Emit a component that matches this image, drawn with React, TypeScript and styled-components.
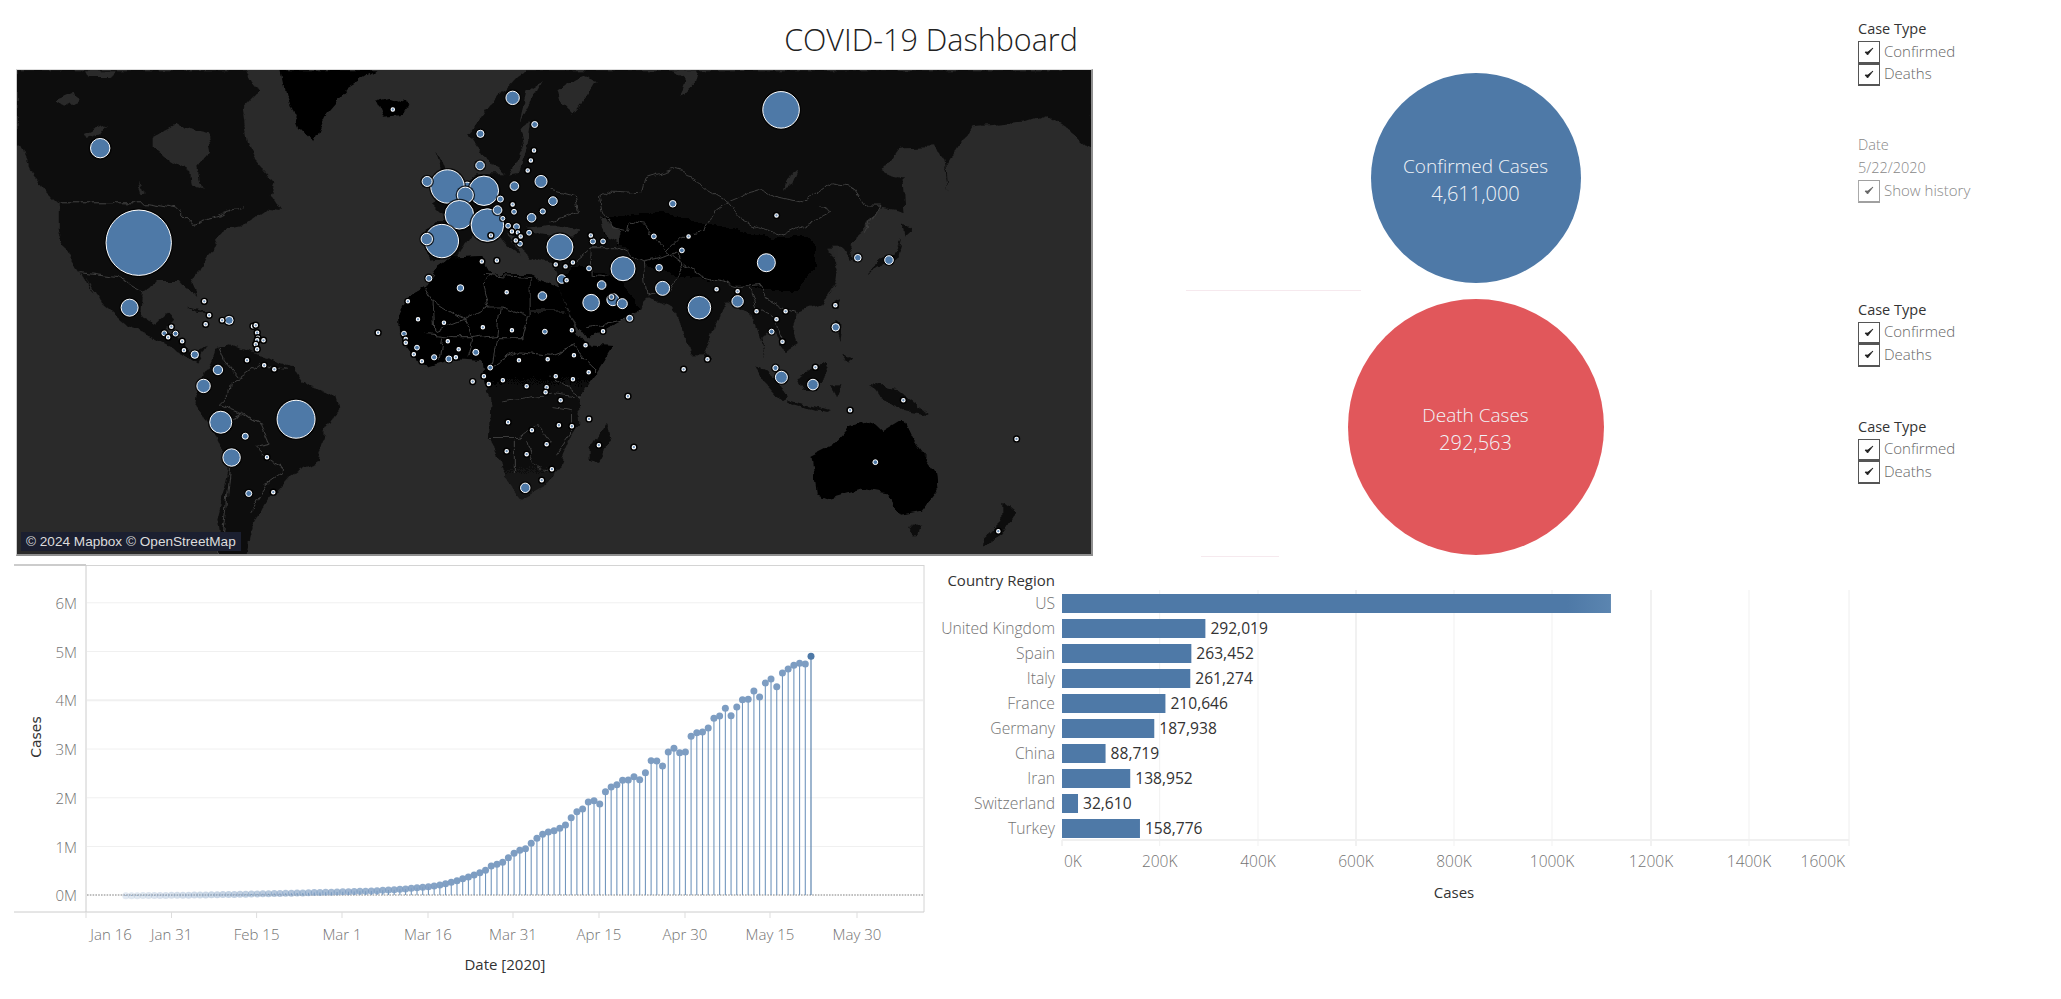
import styled, { createGlobalStyle } from 'styled-components';

const SANS = '"Open Sans", "Noto Sans", sans-serif';
const BLUE = '#4e79a7';
const RED = '#e1575b';

const GlobalStyle = createGlobalStyle`
  html, body {
    margin: 0;
    background: #fff;
    font-family: ${SANS};
  }
`;

// map shapes are traced from the reference, in a 3x-ish grid; east half is shifted by 1568
const EAST = 1568;
const SX = 0.35075;
const SY = 1 / 3;
const OCEAN = '#2a2a2a';
type Pt = [number, number];
const east = (pts: Pt[]): Pt[] => pts.map(([x, y]) => [x + EAST, y] as Pt);
const toPoints = (pts: Pt[]) => pts.map((p) => p.join(',')).join(' ');

const northAmerica: Pt[] = [
  [45, 27], [700, 27], [735, 90], [690, 140], [700, 240], [725, 300], [780, 365], [770, 400], [805, 450], [755, 445],
  [700, 490], [640, 500], [605, 560], [565, 630], [545, 660], [560, 710], [540, 695], [510, 660], [440, 660], [405, 690],
  [400, 770], [440, 795], [480, 755], [495, 770], [470, 810], [520, 840], [545, 880], [590, 860], [560, 905], [500, 870],
  [440, 830], [360, 790], [290, 725], [245, 650], [265, 700], [230, 635], [190, 580], [165, 510], [165, 430], [130, 395],
  [90, 340], [60, 250], [45, 255],
];
const greenland: Pt[] = [[800, 27], [1072, 27], [990, 80], [925, 160], [890, 245], [850, 200], [815, 100]];
const iceland: Pt[] = [[1070, 122], [1110, 110], [1160, 130], [1140, 165], [1090, 170]];
const southAmerica: Pt[] = [
  [610, 860], [650, 850], [740, 880], [830, 920], [860, 965], [960, 1010], [968, 1045], [925, 1110], [905, 1200], [830, 1240],
  [770, 1310], [750, 1340], [715, 1400], [700, 1484], [630, 1484], [620, 1380], [650, 1220], [630, 1160], [555, 1030], [560, 980],
  [600, 900],
];
const africa: Pt[] = [
  [1135, 760], [1160, 710], [1210, 680], [1250, 620], [1290, 590], [1370, 585], [1400, 640], [1510, 640],
  ...east([[25, 680], [65, 800], [100, 850], [180, 855], [130, 940], [80, 1010], [85, 1090], [40, 1170], [25, 1220]]),
  [1560, 1270], [1480, 1315], [1440, 1250], [1395, 1130], [1400, 1020], [1385, 975], [1370, 900], [1300, 895], [1220, 920],
  [1180, 890], [1140, 830],
];
const eurasia: Pt[] = [
  [1335, 220], [1400, 130], [1470, 50], [1500, 27],
  ...east([
    [1545, 27], [1545, 270], [1480, 210], [1420, 165], [1345, 185], [1205, 195], [1130, 310], [1135, 390],
    [1125, 300], [1100, 255], [1000, 258], [945, 330], [1005, 360], [1010, 450], [940, 440], [890, 510], [850, 545], [865, 605],
    [835, 560], [790, 560], [820, 620], [815, 670], [770, 735], [700, 755], [690, 790], [705, 850], [670, 875], [630, 800],
    [605, 830], [615, 890], [600, 830], [570, 750], [500, 720], [480, 770], [440, 880], [405, 880], [350, 740], [275, 710],
    [255, 745], [150, 810], [105, 835], [60, 770], [25, 680], [20, 640], [10, 605],
  ]),
  [1530, 590], [1510, 600], [1480, 540], [1440, 505], [1480, 580], [1450, 560], [1400, 500], [1350, 510], [1300, 590],
  [1225, 595], [1205, 520], [1240, 480], [1285, 480], [1232, 425], [1300, 380], [1360, 340], [1440, 340], [1400, 310],
];
const australia: Pt[] = east([
  [745, 1185], [800, 1155], [850, 1100], [920, 1080], [950, 1110], [1005, 1075], [1030, 1130], [1100, 1230], [1105, 1290], [1060, 1350],
  [1000, 1362], [960, 1300], [880, 1285], [790, 1312], [760, 1300],
]);

const islands: Pt[][] = [
  [[1240, 275], [1265, 325], [1290, 370], [1230, 400], [1255, 340]],
  ...[
    [[165, 1085], [170, 1130], [140, 1210], [115, 1200], [115, 1160]],
    [[1030, 1395], [1055, 1395], [1050, 1420], [1035, 1420]],
    [[1290, 1320], [1330, 1355], [1300, 1400], [1270, 1440], [1230, 1460], [1240, 1430], [1290, 1380]],
    [[1000, 530], [990, 590], [950, 610], [900, 640], [950, 590], [985, 570]],
    [[1005, 490], [1030, 500], [1010, 520]],
    [[585, 910], [640, 950], [680, 1010], [660, 1018], [600, 950]],
    [[705, 950], [780, 900], [790, 920], [760, 990], [720, 990]],
    [[675, 1022], [800, 1050], [790, 1056], [680, 1032]],
    [[800, 970], [830, 970], [820, 1010]],
    [[910, 970], [990, 985], [1080, 1060], [1000, 1050], [940, 1010]],
    [[810, 780], [830, 790], [825, 840]],
    [[830, 880], [860, 885], [850, 905]],
    [[805, 725], [820, 718], [815, 745]],
    [[440, 875], [458, 895], [445, 905]],
  ].map((p) => east(p as Pt[])),
  [[530, 740], [590, 752], [590, 758], [545, 748]],
];

// inland water and arctic channels, painted back over the land
const water: Pt[][] = [
  [[430, 230], [500, 190], [590, 220], [600, 270], [560, 320], [575, 385], [545, 370], [540, 330], [470, 290], [430, 260]],
  [[150, 120], [210, 95], [220, 120], [180, 140]],
  [[230, 220], [300, 190], [280, 220], [240, 230]],
  [[240, 30], [330, 30], [310, 50], [250, 50]],
  [[390, 355], [410, 400], [400, 405]],
  [[1450, 340], [1490, 260], [1480, 200], [1510, 180], [1500, 250], [1480, 335]],
  [[1480, 180], [1500, 90], [1540, 60], [1510, 120]],
  ...[
    [[290, 27], [420, 27], [410, 70], [370, 110], [385, 60], [350, 30]],
    [[20, 90], [90, 40], [130, 60], [100, 110], [60, 160], [30, 130]],
    [[-70, 500], [10, 490], [85, 505], [60, 530], [-30, 520]],
    [[140, 470], [200, 510], [195, 550], [160, 530]],
    [[690, 330], [710, 320], [690, 370], [665, 385]],
  ].map((p) => east(p as Pt[])),
];

const centralAsia: Pt[] = east([[100, 480], [300, 450], [540, 510], [680, 540], [750, 490], [760, 620], [710, 700], [610, 680], [500, 670], [300, 630]]);
const arabia: Pt[] = east([[25, 680], [60, 610], [190, 650], [255, 745], [150, 810], [105, 835], [60, 770]]);
const sahara: Pt[] = [
  [1135, 760], [1160, 710], [1210, 680], [1250, 620], [1290, 590], [1370, 585], [1400, 640], [1510, 640],
  ...east([[25, 680], [65, 800], [100, 850]]),
  [1500, 860], [1400, 830], [1250, 860], [1160, 850],
];

const borders: Pt[][] = [
  [[165, 425], [420, 425], [500, 440], [545, 490], [640, 455], [690, 440]],
  [[230, 635], [330, 650], [370, 670], [405, 690]],
  [[625, 860], [640, 900], [680, 950], [655, 960], [650, 1000], [620, 1030], [680, 1055], [740, 1090], [765, 1150], [725, 1160], [760, 1195], [800, 1215], [800, 1240], [760, 1270], [710, 1350]],
  [[655, 1220], [640, 1380], [625, 1484]],
  [[680, 950], [740, 905], [780, 920], [815, 925]],
  [[655, 1075], [690, 1055], [720, 1080], [745, 1090]],
  [[1210, 680], [1230, 715], [1320, 775], [1390, 735], [1375, 670], [1400, 640]],
  [[1375, 640], [1510, 650], [1510, 770], [1425, 735], [1390, 735]],
  [[1510, 750], [1608, 750]],
  [[1230, 715], [1235, 810], [1320, 775], [1345, 830], [1415, 820], [1425, 735]],
  [[1505, 770], [1490, 830], [1415, 830], [1400, 920]],
  [[1210, 820], [1290, 830], [1345, 830], [1330, 890]],
  [[1400, 920], [1480, 870], [1568, 880], [1640, 850]],
  [[1430, 1020], [1500, 1010], [1568, 1000], [1640, 1010]],
  [[1395, 1130], [1480, 1130], [1530, 1090], [1568, 1150]],
  [[1465, 1140], [1465, 1240]],
  [[1500, 1140], [1520, 1210], [1568, 1240]],
  [[1260, 830], [1250, 900]],
  ...[
    [[140, 410], [170, 390], [260, 395], [270, 350], [345, 325], [410, 345], [440, 385], [505, 425], [470, 450], [440, 510], [370, 525], [330, 570], [270, 490], [225, 480], [220, 510], [180, 500], [150, 460], [140, 410]],
    [[505, 425], [560, 400], [610, 385], [640, 405], [720, 425], [800, 365], [860, 375], [900, 435], [940, 435], [900, 510]],
    [[505, 425], [540, 470], [590, 500], [665, 525], [730, 490], [800, 450], [765, 430]],
    [[330, 570], [430, 650], [540, 680], [600, 670], [610, 710], [660, 740], [700, 755]],
    [[265, 600], [310, 590], [360, 570], [375, 620], [340, 690], [275, 705]],
    [[120, 560], [190, 560], [265, 600], [270, 660], [275, 705]],
    [[60, 610], [120, 560], [125, 640], [190, 650]],
    [[570, 680], [590, 740], [640, 770], [660, 840]],
    [[0, 480], [80, 450], [70, 410], [0, 390]],
    [[105, 800], [200, 780], [250, 745]],
    [[20, 880], [60, 850], [100, 900], [130, 930]],
    [[0, 940], [80, 1000], [85, 1010]],
    [[0, 1040], [60, 1050], [60, 1120], [20, 1180]],
  ].map((p) => east(p as Pt[])),
];

type Bubble = [number, number, number];
const TINY = 1.7;
const bubbles: Bubble[] = [
  [393, 545, 32.7], [842, 1075, 19], [283, 261, 9.7], [367, 740, 8.5], [627, 1084, 11], [658, 1190, 8.7], [578, 975, 6.7],
  [619, 927, 4.7], [553, 881, 3.7], [697, 1126, 3], [707, 1298, 3], [651, 778, 4], [1460, 110, 6.7], [1523, 190, 3],
  [1368, 218, 3.6], [1367, 313, 4.3], [1330, 385, 7.3], [1274, 376, 16.7], [1216, 361, 5], [1378, 389, 14.7], [1325, 402, 8],
  [1308, 461, 14.3], [1388, 492, 16.3], [1258, 540, 16.7], [1215, 534, 5.7], [1417, 447, 4.3], [1425, 414, 3], [1465, 375, 4.3],
  [1541, 361, 6], [1514, 470, 4.3], [1471, 497, 3], [1546, 451, 2.6], [1507, 515, 2.4], [1481, 548, 2.4], [1464, 452, 2.4],
  [1447, 494, 2.4], [1432, 472, 2], [1221, 652, 3], [1311, 681, 3.3], [1545, 705, 4.3], [1552, 812, 2.4], [1150, 818, 2.4],
  [1187, 860, 2.4], [1236, 889, 2.6], [1278, 894, 3], [1355, 874, 3], [1396, 920, 2.4], [1496, 1281, 4.7], [466, 817, 2.4], [498, 818, 2.4],
  ...([
    [658, 146, 18.3], [349, 428, 3.3], [7, 420, 4.3], [27, 558, 13], [121, 541, 2.6], [150, 541, 2.4], [295, 526, 2.4], [375, 568, 2.4],
    [110, 622, 2.4], [207, 623, 12], [310, 620, 3.3], [320, 682, 7], [32, 654, 4.3], [146, 672, 4.3], [116, 725, 8.3], [178, 716, 6],
    [174, 708, 2.4], [205, 728, 5], [226, 772, 3], [425, 740, 11.3], [534, 721, 5.7], [616, 605, 9], [877, 590, 3.3], [966, 597, 4.3],
    [814, 799, 3.7], [631, 812, 2.4], [642, 921, 2.6], [659, 949, 6], [749, 971, 5.3], [927, 1204, 2.4],
  ] as Bubble[]).map(([x, y, r]) => [x + EAST, y, r] as Bubble),
];
const tinyDots: Pt[] = [
  [1118, 145], [1521, 268], [1512, 298], [1503, 328], [1460, 430], [1458, 511], [1475, 514], [1483, 526], [1469, 538], [1398, 523],
  [1372, 601], [1415, 598], [1443, 694], [1161, 721], [1190, 775], [1264, 785], [1375, 799], [1458, 808], [1076, 815], [1155, 834],
  [1155, 845], [1275, 841], [1306, 865], [1298, 889], [1178, 880], [1201, 901], [1478, 898], [1560, 895], [1378, 946], [1346, 962],
  [1392, 969], [1432, 958], [1500, 976], [1557, 979], [1554, 994], [1447, 1084], [1515, 1108], [1557, 1150], [1443, 1171], [1500, 1180],
  [1543, 1258], [580, 721], [594, 763], [584, 790], [631, 778], [486, 797], [477, 829], [517, 841], [522, 868], [719, 796],
  [727, 793], [731, 815], [733, 830], [731, 838], [749, 838], [727, 850], [731, 865], [702, 898], [751, 913], [780, 925],
  [759, 1189], [777, 1294],
  ...east([
    [645, 463], [115, 523], [394, 526], [15, 610], [64, 604], [43, 616], [46, 658], [474, 685], [534, 691], [813, 733],
    [588, 751], [671, 751], [645, 775], [662, 842], [756, 919], [1007, 1018], [855, 1048], [448, 895], [380, 925], [221, 1006],
    [150, 811], [61, 808], [100, 853], [67, 883], [109, 934], [15, 946], [64, 955], [29, 1018], [110, 1074], [24, 1093],
    [61, 1096], [138, 1153], [238, 1159], [4, 1225], [1330, 1134], [1278, 1411],
  ]),
];

function WorldMap() {
  return (
    <MapSvg viewBox="16 69 1075 484">
      <defs>
        <linearGradient id="africaShade" x1="0" y1="0" x2="0" y2="1">
          <stop offset="0.3" stopColor="#000" />
          <stop offset="1" stopColor="#151515" />
        </linearGradient>
        <filter id="coast" filterUnits="userSpaceOnUse" x="0" y="60" width="1200" height="520">
          <feTurbulence type="fractalNoise" baseFrequency="0.07" numOctaves="3" seed="4" />
          <feDisplacementMap in="SourceGraphic" scale="9" xChannelSelector="R" yChannelSelector="G" />
        </filter>
        <filter id="soft" x="-20%" y="-20%" width="140%" height="140%">
          <feGaussianBlur stdDeviation="30" />
        </filter>
      </defs>
      <rect x="0" y="0" width="1200" height="600" fill={OCEAN} />
      <g filter="url(#coast)">
        <g transform={`translate(0 60) scale(${SX} ${SY})`}>
          <polygon points={toPoints(northAmerica)} fill="#0f0f0f" />
          <polygon points={toPoints(greenland)} fill="#000" />
          <polygon points={toPoints(iceland)} fill="#000" />
          <polygon points={toPoints(southAmerica)} fill="#111" />
          <polygon points={toPoints(eurasia)} fill="#0d0d0d" />
          <polygon points={toPoints(centralAsia)} fill="#040404" filter="url(#soft)" />
          <polygon points={toPoints(arabia)} fill="#000" />
          <polygon points={toPoints(africa)} fill="url(#africaShade)" />
          <polygon points={toPoints(sahara)} fill="#000" />
          <polygon points={toPoints(australia)} fill="#000" />
          {islands.map((p, i) => (
            <polygon key={i} points={toPoints(p)} fill="#0a0a0a" />
          ))}
          {water.map((p, i) => (
            <polygon key={i} points={toPoints(p)} fill={OCEAN} />
          ))}
          {borders.map((p, i) => (
            <polyline key={i} points={toPoints(p)} fill="none" stroke="#3e3e3e" strokeWidth="1" vectorEffect="non-scaling-stroke" />
          ))}
        </g>
      </g>
      {bubbles.map(([x, y, r], i) => (
        <g key={i}>
          <circle cx={x * SX} cy={60 + y * SY} r={r + 1.8} fill="#000" opacity="0.75" />
          <circle cx={x * SX} cy={60 + y * SY} r={r} fill={BLUE} stroke="#fff" strokeWidth="1" />
        </g>
      ))}
      {tinyDots.map(([x, y], i) => (
        <g key={i}>
          <circle cx={x * SX} cy={60 + y * SY} r={TINY + 2} fill="#000" />
          <circle cx={x * SX} cy={60 + y * SY} r={TINY} fill="#6b8fb8" stroke="#fff" strokeWidth="1.1" />
        </g>
      ))}
    </MapSvg>
  );
}

const yTicks = ['6M', '5M', '4M', '3M', '2M', '1M'];
const Y_TOP = 602.8;
const Y_STEP = 48.75;
const xTicks: [string, number][] = [
  ['Jan 31', 171.5], ['Feb 15', 256.6], ['Mar 1', 342], ['Mar 16', 428], ['Mar 31', 513],
  ['Apr 15', 599], ['Apr 30', 685], ['May 15', 770], ['May 30', 857],
];

// dot heights read off the curve, oldest first (page y = 555 + v / 3)
const tail = [
  1006, 1005, 1004, 1003, 1002, 1000, 998, 997, 995, 993, 990, 986, 982, 977, 971, 966, 960, 953, 946, 933,
  928, 922, 908, 895, 886, 881, 865, 850, 838, 831, 827, 820, 810, 788, 770, 762, 741, 737, 747, 710,
  696, 689, 676, 675, 665, 674, 653, 617, 618, 633, 591, 580, 593, 591, 544, 533, 531, 519, 490, 483,
  460, 482, 456, 434, 433, 408, 426, 384, 372, 395, 354, 342, 331, 325, 327, 304,
];
const DOT_STEP = 5.71;
const LAST_X = 811;
const TOTAL = 121;
const curve = Array.from({ length: TOTAL }, (_, i) => {
  const fromEnd = TOTAL - 1 - i;
  const x = LAST_X - fromEnd * DOT_STEP;
  const tailIndex = tail.length - 1 - fromEnd;
  const v = tailIndex >= 0 ? tail[tailIndex] : 1022 - 15 * Math.pow(i / (TOTAL - tail.length), 1.6);
  return { x, y: 555 + v / 3, t: i / (TOTAL - 1) };
});

function LineChart() {
  return (
    <ChartSvg width="916" height="439" viewBox="14 560 916 439">
      <line x1="14" x2="86" y1="565" y2="565" stroke="#ccc" strokeWidth="2" />
      <line x1="86" x2="924" y1="565.5" y2="565.5" stroke="#d4d4d4" />
      <line x1="924" x2="924" y1="565" y2="912" stroke="#d4d4d4" />
      <line x1="86" x2="86" y1="565" y2="912" stroke="#ccc" />
      <line x1="14" x2="924" y1="912" y2="912" stroke="#ccc" />
      {yTicks.map((label, i) => (
        <g key={label}>
          <line x1="87" x2="923" y1={Y_TOP + i * Y_STEP} y2={Y_TOP + i * Y_STEP} stroke="#f0f0f0" strokeWidth={label === '4M' ? 2 : 1} />
          <AxisText x="77" y={Y_TOP + i * Y_STEP + 6} textAnchor="end">{label}</AxisText>
        </g>
      ))}
      <AxisText x="77" y={Y_TOP + 6 * Y_STEP + 6} textAnchor="end">0M</AxisText>
      <line x1="87" x2="924" y1="895" y2="895" stroke="#aaa" strokeWidth="1.6" strokeDasharray="1.6 1.2" />
      {curve.map((d, i) => (
        <line key={i} x1={d.x} x2={d.x} y1={d.y} y2="895" stroke={i === TOTAL - 1 ? BLUE : '#7296bd'} strokeWidth="1.1" />
      ))}
      {curve.map((d, i) => (
        <circle
          key={i}
          cx={d.x}
          cy={d.y}
          r="3.5"
          fill={i === TOTAL - 1 ? BLUE : '#7d9dc2'}
          opacity={i === TOTAL - 1 ? 1 : Math.min(1, 0.22 + d.t * 1.6)}
        />
      ))}
      <line x1="86" x2="86" y1="912" y2="918" stroke="#ddd" />
      {xTicks.map(([label, x]) => (
        <g key={label}>
          <line x1={x} x2={x} y1="912" y2="918" stroke="#ddd" />
          <AxisText x={x} y="940" textAnchor="middle">{label}</AxisText>
        </g>
      ))}
      <AxisText x="111" y="940" textAnchor="middle">Jan 16</AxisText>
      <TitleText x="505" y="970" textAnchor="middle">Date [2020]</TitleText>
      <RotatedTitle x="-737" y="41" transform="rotate(-90)" textAnchor="middle">Cases</RotatedTitle>
    </ChartSvg>
  );
}

const countries: { name: string; value: number; label?: string }[] = [
  { name: 'US', value: 1118000 },
  { name: 'United Kingdom', value: 292019, label: '292,019' },
  { name: 'Spain', value: 263452, label: '263,452' },
  { name: 'Italy', value: 261274, label: '261,274' },
  { name: 'France', value: 210646, label: '210,646' },
  { name: 'Germany', value: 187938, label: '187,938' },
  { name: 'China', value: 88719, label: '88,719' },
  { name: 'Iran', value: 138952, label: '138,952' },
  { name: 'Switzerland', value: 32610, label: '32,610' },
  { name: 'Turkey', value: 158776, label: '158,776' },
];
const BAR_X = 1062;
const PX_PER_CASE = 0.000491;
const barTicks: [string, number][] = [
  ['200K', 1159.7], ['400K', 1258], ['600K', 1356], ['800K', 1454],
  ['1000K', 1552], ['1200K', 1651], ['1400K', 1749],
];

function BarChart() {
  return (
    <ChartSvg width="932" height="439" viewBox="930 560 932 439">
      <defs>
        <linearGradient id="usFade" x1="0" y1="0" x2="1" y2="0">
          <stop offset="0.92" stopColor={BLUE} />
          <stop offset="1" stopColor="#5b85b0" />
        </linearGradient>
      </defs>
      <line x1={BAR_X} x2={BAR_X} y1="840" y2="846" stroke="#e6e6e6" />
      <line x1="1849" x2="1849" y1="590" y2="846" stroke="#eee" />
      {barTicks.map(([label, x]) => (
        <g key={label}>
          <line x1={x} x2={x} y1="590" y2="846" stroke="#f1f1f1" strokeWidth={label === '600K' || label === '1200K' ? 2 : 1} />
          <AxisText $size={15.5} x={x} y="867" textAnchor="middle">{label}</AxisText>
        </g>
      ))}
      <AxisText $size={15.5} x="1064" y="867">0K</AxisText>
      <AxisText $size={15.5} x="1845" y="867" textAnchor="end">1600K</AxisText>
      <line x1={BAR_X} x2="1849" y1="840" y2="840" stroke="#f0f0f0" strokeWidth="2" />
      <TitleText x="1055" y="586" textAnchor="end">Country Region</TitleText>
      {countries.map((c, i) => {
        const y = 594 + i * 25;
        const width = c.value * PX_PER_CASE;
        return (
          <g key={c.name}>
            <rect x={BAR_X} y={y} width={width} height="19" fill={i === 0 ? 'url(#usFade)' : BLUE} />
            <AxisText $size={15.7} x="1055" y={y + 15} textAnchor="end">{c.name}</AxisText>
            {c.label && <ValueText x={BAR_X + width + 5} y={y + 15}>{c.label}</ValueText>}
          </g>
        );
      })}
      <TitleText x="1454" y="898" textAnchor="middle">Cases</TitleText>
    </ChartSvg>
  );
}

function Check({ $muted }: { $muted?: boolean }) {
  return (
    <CheckMark viewBox="0 0 10 9">
      <path d="M1 5 L3.6 8 L9 1 L3.8 5 Z" fill={$muted ? '#666' : '#222'} stroke={$muted ? '#666' : '#222'} strokeWidth="0.8" />
    </CheckMark>
  );
}

function CaseTypeFilter({ $top }: { $top: number }) {
  return (
    <FilterGroup $top={$top}>
      <FilterTitle>Case Type</FilterTitle>
      <FilterRow>
        <CheckBox><Check /></CheckBox>
        <OptionLabel>Confirmed</OptionLabel>
      </FilterRow>
      <FilterRow>
        <CheckBox><Check /></CheckBox>
        <OptionLabel>Deaths</OptionLabel>
      </FilterRow>
    </FilterGroup>
  );
}

export default function App() {
  return (
    <Page>
      <GlobalStyle />
      <Main>
        <Title>COVID-19 Dashboard</Title>
        <TopRow>
          <MapFrame>
            <WorldMap />
            <Attribution>© 2024 Mapbox © OpenStreetMap</Attribution>
          </MapFrame>
          <KpiColumn>
            <KpiCircle $size={210} $color={BLUE}>
              <KpiName>Confirmed Cases</KpiName>
              <KpiValue>4,611,000</KpiValue>
            </KpiCircle>
            <PaleRule $width={175} $left={93} $top={7} $bottom={8} />
            <KpiCircle $size={256} $color={RED}>
              <KpiName>Death Cases</KpiName>
              <KpiValue>292,563</KpiValue>
            </KpiCircle>
            <PaleRule $width={78} $left={108} $top={1} $bottom={0} />
          </KpiColumn>
        </TopRow>
        <BottomRow>
          <LineChart />
          <BarChart />
        </BottomRow>
      </Main>
      <FilterColumn>
        <CaseTypeFilter $top={20} />
        <DateFilter>
          <MutedLine>Date</MutedLine>
          <MutedLine>5/22/2020</MutedLine>
          <FilterRow>
            <CheckBox $muted><Check $muted /></CheckBox>
            <OptionLabel $muted>Show history</OptionLabel>
          </FilterRow>
        </DateFilter>
        <CaseTypeFilter $top={98} />
        <CaseTypeFilter $top={51} />
      </FilterColumn>
    </Page>
  );
}

const Page = styled.div`
  width: 2061px;
  height: 999px;
  overflow: hidden;
  display: flex;
  background: #fff;
`;

const Main = styled.div`
  width: 1858px;
  flex: none;
`;

const Title = styled.h1`
  margin: 0;
  height: 69px;
  padding: 18px 0 0 4px;
  box-sizing: border-box;
  text-align: center;
  font-size: 30.5px;
  line-height: 42px;
  font-weight: 300;
  color: #222;
`;

const TopRow = styled.div`
  display: flex;
  height: 491px;
  padding-left: 16px;
`;

const MapFrame = styled.div`
  position: relative;
  width: 1077px;
  height: 487px;
  box-sizing: border-box;
  flex: none;
  border-top: 1px solid #ddd;
  border-left: 1px solid #ccc;
  border-right: 2px solid #8f8f8f;
  border-bottom: 2px solid #8f8f8f;
`;

const MapSvg = styled.svg`
  display: block;
  width: 100%;
  height: 100%;
`;

const Attribution = styled.div`
  position: absolute;
  left: 4px;
  bottom: 3px;
  height: 19px;
  padding: 0 5px;
  background: #1b1f30;
  color: #dcdcdc;
  font-family: 'Liberation Sans', Arial, sans-serif;
  font-size: 13.6px;
  line-height: 19px;
  white-space: nowrap;
`;

const KpiColumn = styled.div`
  flex: 1;
  display: flex;
  flex-direction: column;
  align-items: center;
  padding-top: 4px;
  box-sizing: border-box;
`;

const KpiCircle = styled.div<{ $size: number; $color: string }>`
  width: ${(p) => p.$size}px;
  height: ${(p) => p.$size}px;
  flex: none;
  border-radius: 50%;
  background: ${(p) => p.$color};
  color: #f1f4f8;
  display: flex;
  flex-direction: column;
  align-items: center;
  justify-content: center;
  padding-top: 4px;
  box-sizing: border-box;
  font-weight: 300;
  line-height: 28px;
`;

const KpiName = styled.div`
  font-size: 19px;
`;

const KpiValue = styled.div`
  font-size: 20px;
`;

const PaleRule = styled.div<{ $width: number; $left: number; $top: number; $bottom: number }>`
  width: ${(p) => p.$width}px;
  height: 1px;
  flex: none;
  margin: ${(p) => p.$top}px 0 ${(p) => p.$bottom}px ${(p) => p.$left}px;
  align-self: flex-start;
  background: #f6e9ee;
`;

const BottomRow = styled.div`
  display: flex;
  padding-left: 14px;
`;

const ChartSvg = styled.svg`
  display: block;
  flex: none;
`;

const AxisText = styled.text<{ $size?: number }>`
  font-family: ${SANS};
  font-size: ${(p) => p.$size ?? 15}px;
  font-weight: 300;
  fill: #737373;
`;

const ValueText = styled.text`
  font-family: ${SANS};
  font-size: 15.6px;
  fill: #333;
`;

const TitleText = styled.text`
  font-family: ${SANS};
  font-size: 15px;
  fill: #333;
`;

const RotatedTitle = styled.text`
  font-family: 'DejaVu Sans', sans-serif;
  font-size: 14px;
  fill: #333;
`;

const FilterColumn = styled.div`
  flex: 1;
  display: flex;
  flex-direction: column;
`;

const FilterGroup = styled.div<{ $top: number }>`
  margin-top: ${(p) => p.$top}px;
`;

const FilterTitle = styled.div`
  height: 21px;
  font-size: 14.5px;
  line-height: 18px;
  color: #333;
`;

const FilterRow = styled.div`
  display: flex;
  align-items: center;
  height: 22.5px;
  gap: 4px;
`;

const CheckBox = styled.div<{ $muted?: boolean }>`
  width: 22px;
  height: 22.5px;
  box-sizing: border-box;
  flex: none;
  display: flex;
  align-items: center;
  justify-content: center;
  border: 1px solid ${(p) => (p.$muted ? '#a0a0a0' : '#555')};
  border-bottom-width: 2px;
  border-left-color: ${(p) => (p.$muted ? '#aaa' : '#555')};
`;

const CheckMark = styled.svg`
  width: 10px;
  height: 9px;
`;

const OptionLabel = styled.div<{ $muted?: boolean }>`
  font-size: 15px;
  font-weight: 300;
  color: ${(p) => (p.$muted ? '#888' : '#666')};
  white-space: nowrap;
  margin-top: -3px;
`;

const DateFilter = styled.div`
  margin-top: 48px;
`;

const MutedLine = styled.div`
  height: 23px;
  font-size: 14.5px;
  line-height: 22px;
  font-weight: 300;
  color: #888;
`;
